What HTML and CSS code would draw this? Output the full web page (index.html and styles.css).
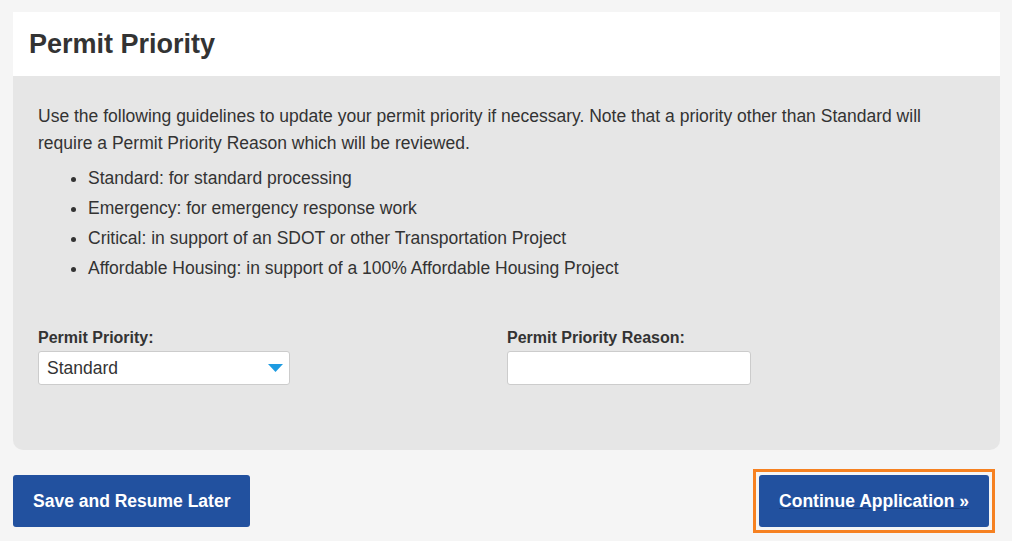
FILE: index.html
```html
<!DOCTYPE html>
<html lang="en">
<head>
<meta charset="utf-8">
<title>Permit Priority</title>
<link rel="stylesheet" href="styles.css">
</head>
<body>
<div class="page">
  <section class="card">
    <header class="card-header">
      <h1 class="card-title">Permit Priority</h1>
    </header>
    <div class="card-body">
      <p class="intro">Use the following guidelines to update your permit priority if necessary. Note that a priority other than Standard will require a Permit Priority Reason which will be reviewed.</p>
      <ul class="guide-list">
        <li>Standard: for standard processing</li>
        <li>Emergency: for emergency response work</li>
        <li>Critical: in support of an SDOT or other Transportation Project</li>
        <li>Affordable Housing: in support of a 100% Affordable Housing Project</li>
      </ul>
      <div class="form-row">
        <div class="field">
          <label class="field-label" for="priority">Permit Priority:</label>
          <div class="select-wrap">
            <select id="priority" class="select">
              <option>Standard</option>
              <option>Emergency</option>
              <option>Critical</option>
              <option>Affordable Housing</option>
            </select>
            <svg class="select-arrow" width="15" height="8" viewBox="0 0 15 8" aria-hidden="true"><polygon points="0,0 15,0 7.5,8" fill="#1e9be1"/></svg>
          </div>
        </div>
        <div class="field">
          <label class="field-label" for="reason">Permit Priority Reason:</label>
          <input id="reason" class="text-input" type="text">
        </div>
      </div>
    </div>
  </section>
  <div class="actions">
    <button class="btn" type="button">Save and Resume Later</button>
    <div class="focus-ring">
      <button class="btn btn-focus" type="button">Continue Application »</button>
    </div>
  </div>
</div>
</body>
</html>
```

FILE: styles.css
```css
* { box-sizing: border-box; }

html, body {
  margin: 0;
  padding: 0;
  background: #f5f5f5;
}

body {
  font-family: Arial, "Liberation Sans", sans-serif;
  color: #333333;
  font-size: 17.5px;
}

.page {
  padding: 12px 12px 0 13px;
}

.card {
  width: 987px;
}

.card-header {
  background: #ffffff;
  height: 64px;
  padding: 0 16px;
  display: flex;
  align-items: center;
}

.card-title {
  margin: 0;
  font-size: 27px;
  font-weight: bold;
  color: #333333;
  line-height: 1;
  padding-top: 0;
}

.card-body {
  background: #e6e6e6;
  padding: 27px 25px 65px;
  border-radius: 0 0 10px 10px;
}

.intro {
  margin: 0;
  line-height: 27px;
}

.guide-list {
  margin: 6px 0 0;
  padding-left: 50px;
}

.guide-list li {
  line-height: 30px;
}

.form-row {
  display: grid;
  grid-template-columns: 469px 244px;
  margin-top: 45px;
}

.field {
  display: flex;
  flex-direction: column;
}

.field-label {
  font-size: 16px;
  font-weight: bold;
  line-height: 19px;
  margin-bottom: 4px;
}

.select-wrap {
  position: relative;
  width: 252px;
}

.select {
  appearance: none;
  -webkit-appearance: none;
  width: 252px;
  height: 34px;
  border: 1px solid #cccccc;
  border-radius: 3px;
  background: #ffffff;
  font-family: Arial, "Liberation Sans", sans-serif;
  font-size: 17.5px;
  color: #333333;
  padding: 0 30px 0 8px;
  margin: 0;
}

.select-arrow {
  position: absolute;
  right: 7px;
  top: 13px;
  pointer-events: none;
}

.text-input {
  width: 244px;
  height: 34px;
  border: 1px solid #cccccc;
  border-radius: 3px;
  background: #ffffff;
  margin: 0;
  padding: 0 8px;
  font-family: Arial, "Liberation Sans", sans-serif;
  font-size: 17.5px;
}

.actions {
  width: 987px;
  display: flex;
  justify-content: space-between;
  align-items: center;
  margin-top: 19px;
  padding-right: 5px;
}

.btn {
  display: block;
  background: #22519f;
  color: #ffffff;
  border: none;
  border-radius: 3px;
  font-family: Arial, "Liberation Sans", sans-serif;
  font-size: 17.5px;
  font-weight: bold;
  height: 52px;
  padding: 0 20px;
  cursor: pointer;
}

.focus-ring {
  border: 3px solid #f68121;
  padding: 3px;
}

.btn-focus {
  text-decoration: underline;
  text-decoration-color: #1a3f80;
  outline: none;
}
```
